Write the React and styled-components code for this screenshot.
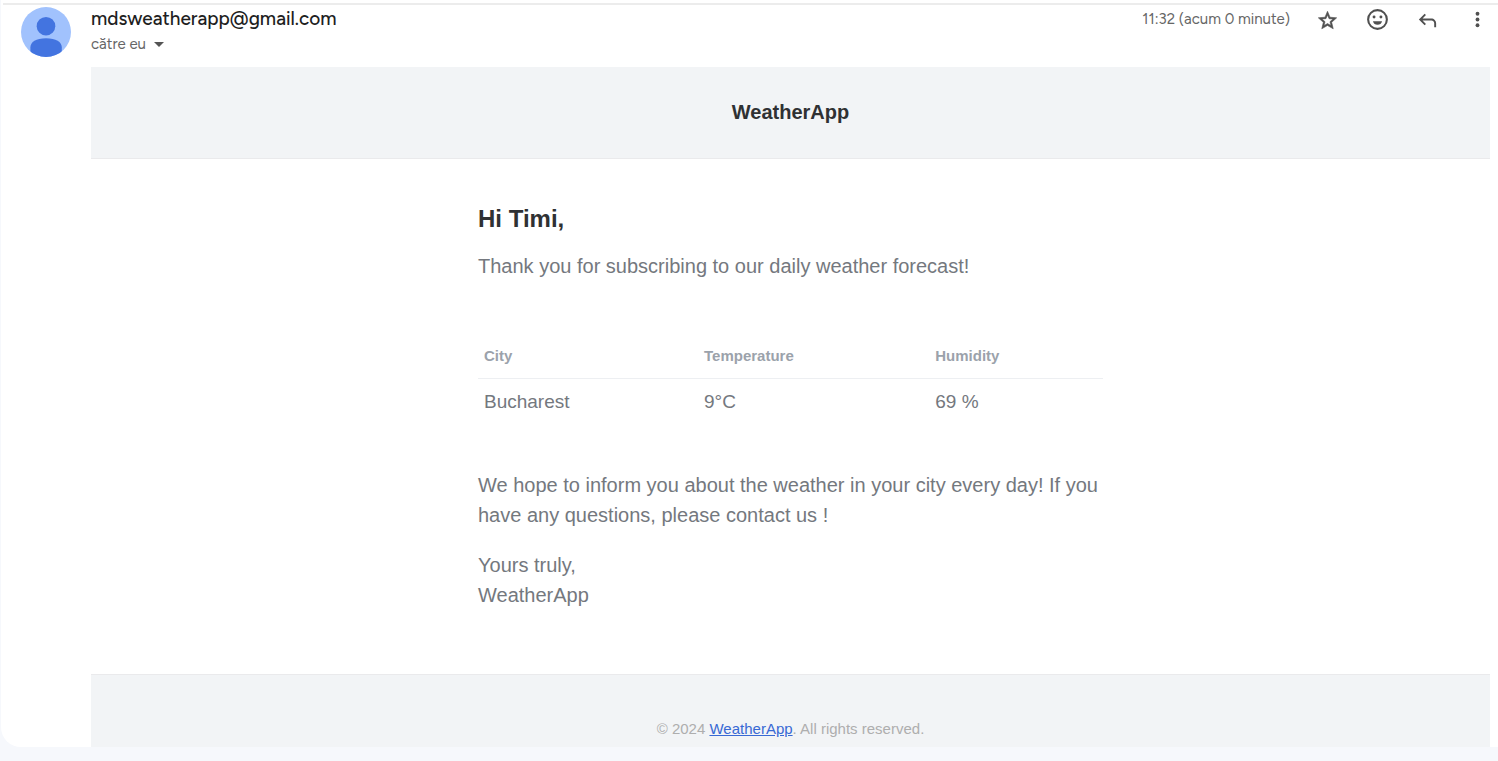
import React from "react";
import styled, { createGlobalStyle } from "styled-components";

const GlobalStyle = createGlobalStyle`
  * { box-sizing: border-box; }
  body {
    margin: 0;
    background: #f6f8fc;
    font-family: "Liberation Sans", Arial, sans-serif;
  }
`;

const Page = styled.main`
  padding: 0 0 14px 1px;
`;

const Card = styled.article`
  background: #fff;
  border-radius: 0 0 0 20px;
  overflow: hidden;
`;

const TopRule = styled.div`
  height: 5px;
  margin-left: 2px;
  border-bottom: 2px solid #ececec;
`;

const Message = styled.div`
  display: grid;
  grid-template-columns: 90px minmax(0, 1fr);
  padding-top: 2px;
`;

const Avatar = styled.svg`
  width: 50px;
  height: 50px;
  margin-left: 20px;
`;

const Header = styled.header`
  display: flex;
  justify-content: space-between;
  height: 60px;
  font-family: Figtree, Roboto, sans-serif;
`;

const Sender = styled.h3`
  margin: 0;
  font-size: 19px;
  line-height: 24px;
  font-weight: 500;
  color: #1f1f1f;
`;

const Recipient = styled.button`
  display: flex;
  align-items: center;
  gap: 8px;
  padding: 0;
  border: 0;
  background: none;
  font-family: inherit;
  font-size: 15px;
  line-height: 26px;
  color: #666;
`;

const Caret = styled.svg`
  width: 10px;
  height: 5px;
  fill: #555;
`;

const Actions = styled.div`
  display: flex;
  align-items: flex-start;
  gap: 10px;
  padding-right: 1px;
`;

const Time = styled.time`
  margin-right: 7px;
  font-size: 15px;
  line-height: 24px;
  color: #666;
`;

const IconButton = styled.button`
  display: grid;
  place-items: center;
  width: 40px;
  height: 25px;
  padding: 0;
  border: 0;
  background: none;

  svg {
    width: ${(p) => p.$size || 25}px;
    height: ${(p) => p.$size || 25}px;
    fill: #505050;
  }
`;

const Mail = styled.section`
  grid-column: 2;
  margin-right: 8px;
`;

const Masthead = styled.div`
  padding: 30px 0 31px;
  background: #f2f4f6;
  border-bottom: 1px solid #eaeaec;
  text-align: center;
  font-size: 20px;
  line-height: 30px;
  font-weight: 700;
  color: #2f3133;
`;

const Content = styled.div`
  max-width: 625px;
  margin: 0 auto;
  padding: 45px 0 44px;
`;

const Greeting = styled.h1`
  margin: 0 0 17px;
  font-size: 24px;
  line-height: 30px;
  font-weight: 700;
  color: #2f3133;
`;

const Paragraph = styled.p`
  margin: 0 0 20px;
  font-size: 20px;
  line-height: 30px;
  color: #74787e;
`;

const Forecast = styled.table`
  width: 100%;
  margin: 53px 0 45px;
  border-collapse: collapse;
  table-layout: fixed;
  text-align: left;

  th {
    padding: 11px 6px;
    border-bottom: 1px solid #edeff2;
    font-size: 15px;
    line-height: 22px;
    color: #9ba2ab;
  }

  td {
    padding: 12px 6px;
    font-size: 19px;
    line-height: 22px;
    color: #74787e;
  }
`;

const Column = styled.col`
  width: ${(p) => p.$width};
`;

const Footer = styled.footer`
  padding: 42px 0 7px;
  background: #f2f4f6;
  border-top: 1px solid #eaeaec;
  text-align: center;
  font-size: 15px;
  line-height: 23px;
  color: #aeaeae;

  a { color: #3869d4; }
`;

export default function App() {
  return (
    <>
      <GlobalStyle />
      <Page>
        <Card>
          <TopRule />
          <Message>
            <Avatar viewBox="0 0 50 50" aria-hidden="true">
              <defs>
                <clipPath id="avatar"><circle cx="25" cy="25" r="25" /></clipPath>
              </defs>
              <g clipPath="url(#avatar)">
                <rect width="50" height="50" fill="#a1c2fd" />
                <circle cx="25" cy="19.2" r="9.3" fill="#4374e0" />
                <path d="M9.4 50V40.5C9.4 35 15 31.3 25 31.3S40.8 35 40.8 40.5V50Z" fill="#4374e0" />
              </g>
            </Avatar>
            <Header>
              <div>
                <Sender>mdsweatherapp@gmail.com</Sender>
                <Recipient type="button">
                  către eu
                  <Caret viewBox="0 0 10 5" aria-hidden="true"><path d="M0 0h10L5 5z" /></Caret>
                </Recipient>
              </div>
              <Actions>
                <Time>11:32 (acum 0 minute)</Time>
                <IconButton type="button" aria-label="Star" $size={23}>
                  <svg viewBox="0 -1 24 24">
                    <path stroke="#505050" strokeWidth="0.6" d="M21.6 9.24l-6.99-.62L12 2.4 9.39 8.63 2.4 9.24l5.26 4.73L6.02 20.7 12 17.27 17.98 20.7l-1.63-6.73L21.6 9.24zM12 15.2l-3.56 2.17 1-4.08-3.22-2.78 4.18-.38L12 6.4l1.61 3.74 4.18.38-3.22 2.78 1 4.08L12 15.2z" />
                  </svg>
                </IconButton>
                <IconButton type="button" aria-label="React">
                  <svg viewBox="0 0 24 24">
                    <path fillRule="evenodd" d="M12 2a10 10 0 1 0 0 20 10 10 0 0 0 0-20zm0 2a8 8 0 1 1 0 16 8 8 0 0 1 0-16z" />
                    <circle cx="8.7" cy="9.6" r="1.4" />
                    <circle cx="15.3" cy="9.6" r="1.4" />
                    <path d="M7.6 13.6h8.8C15.8 15.9 14.2 17 12 17S8.2 15.9 7.6 13.6z" />
                  </svg>
                </IconButton>
                <IconButton type="button" aria-label="Reply" $size={23}>
                  <svg viewBox="0 -1 24 24">
                    <path d="M19 19v-4c0-.83-.29-1.54-.88-2.13A2.9 2.9 0 0 0 16 12H6.83l3.58 3.6L9 17l-6-6 6-6 1.41 1.4L6.83 10H16c1.38 0 2.56.49 3.54 1.46A4.82 4.82 0 0 1 21 15v4z" />
                  </svg>
                </IconButton>
                <IconButton type="button" aria-label="More" $size={23}>
                  <svg viewBox="0 0 24 24">
                    <circle cx="12" cy="6" r="2" />
                    <circle cx="12" cy="12" r="2" />
                    <circle cx="12" cy="18" r="2" />
                  </svg>
                </IconButton>
              </Actions>
            </Header>
            <Mail>
              <Masthead>WeatherApp</Masthead>
              <Content>
                <Greeting>Hi Timi,</Greeting>
                <Paragraph>Thank you for subscribing to our daily weather forecast!</Paragraph>
                <Forecast>
                  <colgroup>
                    <Column $width="35.2%" />
                    <Column $width="37%" />
                    <Column />
                  </colgroup>
                  <thead>
                    <tr>
                      <th scope="col">City</th>
                      <th scope="col">Temperature</th>
                      <th scope="col">Humidity</th>
                    </tr>
                  </thead>
                  <tbody>
                    <tr>
                      <td>Bucharest</td>
                      <td>9°C</td>
                      <td>69 %</td>
                    </tr>
                  </tbody>
                </Forecast>
                <Paragraph>
                  We hope to inform you about the weather in your city every day! If you have any questions, please contact us !
                </Paragraph>
                <Paragraph>
                  Yours truly,
                  <br />
                  WeatherApp
                </Paragraph>
              </Content>
              <Footer>
                © 2024 <a href="#weatherapp">WeatherApp</a>. All rights reserved.
              </Footer>
            </Mail>
          </Message>
        </Card>
      </Page>
    </>
  );
}
